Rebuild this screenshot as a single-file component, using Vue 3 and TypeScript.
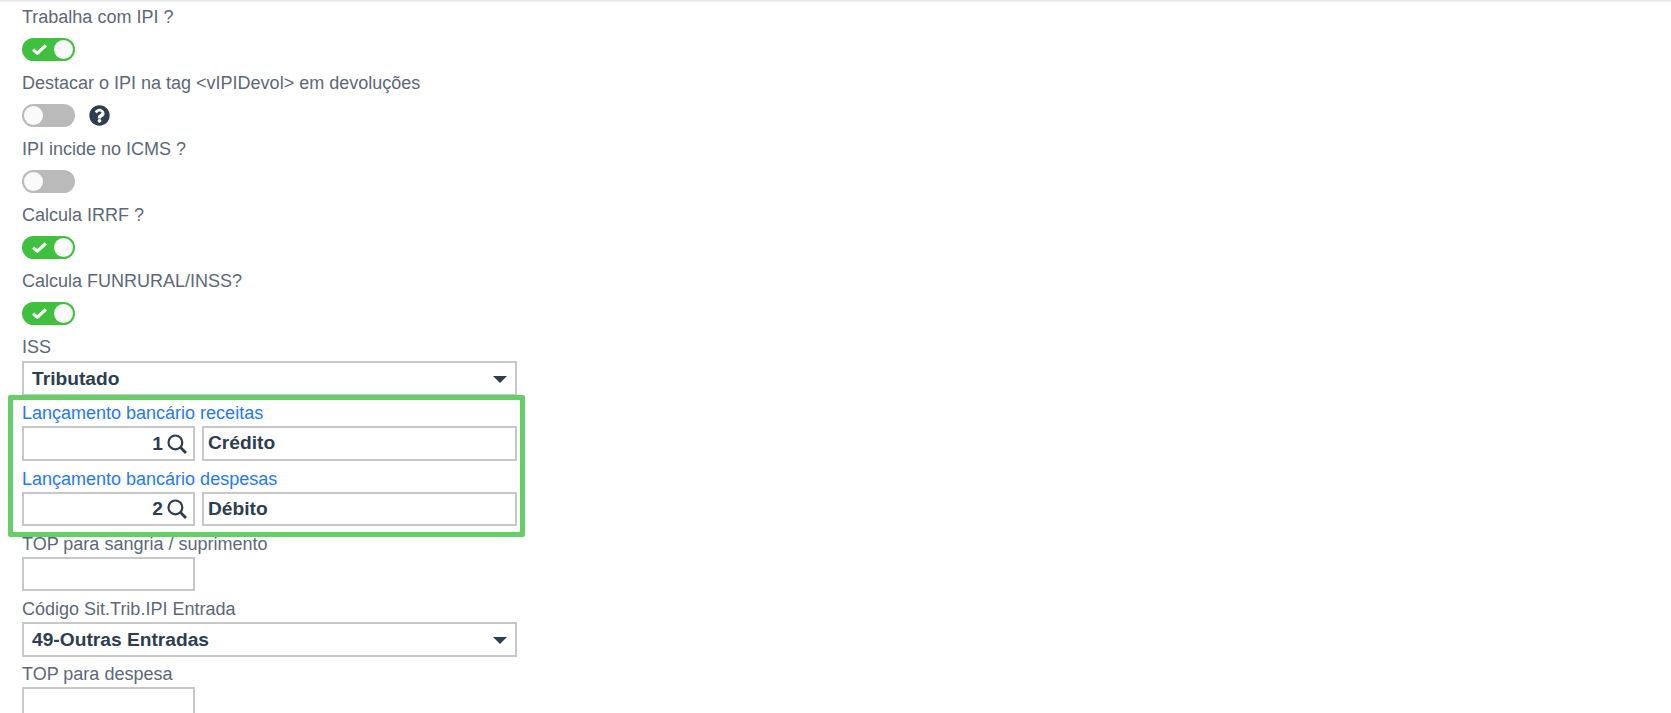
<template>
  <div class="page">
    <div class="top-shadow"></div>

    <div v-for="item in toggles" :key="item.label" class="field">
      <label class="toggle-label">{{ item.label }}</label>
      <div class="toggle-row">
        <span :class="['switch', { on: item.on }]">
          <svg v-if="item.on" class="check" viewBox="0 0 15 11">
            <path d="M1.200 5.600 5.400 9.200 13.800 1.400" fill="none" stroke="#fff" stroke-width="3.200" />
          </svg>
          <span class="knob"></span>
        </span>
        <svg v-if="item.help" class="help" viewBox="0 0 512 512">
          <path
            fill="#2c3e50"
            d="M504 256c0 137-111 248-248 248S8 393 8 256C8 119 119 8 256 8s248 111 248 248zM262.700 90c-54.500 0-89.300 23-116.600 63.800-3.500 5.300-2.400 12.400 2.700 16.300l34.700 26.300c5.200 3.900 12.600 3 16.700-2.100 17.900-22.700 30.100-35.800 57.300-35.800 20.400 0 45.700 13.100 45.700 33 0 15-12.400 22.700-32.600 34-23.600 13.200-54.800 29.700-54.800 70.900V320c0 6.600 5.400 12 12 12h56c6.600 0 12-5.400 12-12v-1.300c0-28.600 83.500-29.800 83.500-107.200C379.300 153.200 318.800 90 262.700 90zM256 339c-25.500 0-46.200 20.700-46.200 46.200 0 25.500 20.700 46.200 46.200 46.200s46.200-20.700 46.200-46.200c0-25.500-20.700-46.200-46.200-46.200z"
          />
        </svg>
      </div>
    </div>

    <div class="field">
      <label class="toggle-label">ISS</label>
      <div class="select">
        <span class="select-value">Tributado</span>
        <span class="caret"></span>
      </div>
    </div>

    <section class="highlighted">
      <div v-for="row in lancamentos" :key="row.label" class="field">
        <label class="field-label link">{{ row.label }}</label>
        <div class="lookup-row">
          <div class="box lookup">
            <span class="code">{{ row.code }}</span>
            <svg class="search" viewBox="0 0 20 20">
              <circle cx="8.400" cy="8.400" r="6.900" fill="none" stroke="#2c3e50" stroke-width="2.200" />
              <path d="M13.300 13.300 19 19" fill="none" stroke="#2c3e50" stroke-width="2.800" />
            </svg>
          </div>
          <div class="box desc">{{ row.desc }}</div>
        </div>
      </div>
      <div class="highlight-frame"></div>
    </section>

    <div class="field">
      <label class="field-label">TOP para sangria / suprimento</label>
      <div class="box lookup"></div>
    </div>

    <div class="field">
      <label class="field-label">Código Sit.Trib.IPI Entrada</label>
      <div class="select">
        <span class="select-value">49-Outras Entradas</span>
        <span class="caret"></span>
      </div>
    </div>

    <div class="field">
      <label class="field-label">TOP para despesa</label>
      <div class="box lookup"></div>
    </div>
  </div>
</template>

<script setup lang="ts">
interface ToggleItem {
  label: string;
  on: boolean;
  help?: boolean;
}

interface LancamentoRow {
  label: string;
  code: number;
  desc: string;
}

const toggles: ToggleItem[] = [
  { label: 'Trabalha com IPI ?', on: true },
  { label: 'Destacar o IPI na tag <vIPIDevol> em devoluções', on: false, help: true },
  { label: 'IPI incide no ICMS ?', on: false },
  { label: 'Calcula IRRF ?', on: true },
  { label: 'Calcula FUNRURAL/INSS?', on: true }
];

const lancamentos: LancamentoRow[] = [
  { label: 'Lançamento bancário receitas', code: 1, desc: 'Crédito' },
  { label: 'Lançamento bancário despesas', code: 2, desc: 'Débito' }
];
</script>

<style>
html,
body {
  margin: 0;
  background: #fff;
  overflow: hidden;
}
</style>

<style scoped>
.page {
  position: relative;
  height: 713px;
  overflow: hidden;
  padding: 3px 0 0 22px;
  box-sizing: border-box;
  font-family: "Liberation Sans", Arial, sans-serif;
  font-size: 18px;
  color: #5c6878;
}

.top-shadow {
  position: absolute;
  top: 0;
  left: 0;
  right: 0;
  height: 3px;
  background: linear-gradient(#e4e4e4, #fff);
}

.field {
  width: 495px;
}

.toggle-label {
  display: block;
  height: 28px;
  line-height: 28px;
  white-space: nowrap;
}

.field-label {
  display: block;
  height: 30.800px;
  padding-top: 4.800px;
  box-sizing: border-box;
  line-height: 26px;
  white-space: nowrap;
}

.toggle-row {
  display: flex;
  align-items: flex-start;
  gap: 14px;
  height: 38px;
  padding-top: 7px;
  box-sizing: border-box;
}

.switch {
  display: flex;
  align-items: center;
  justify-content: space-between;
  box-sizing: border-box;
  width: 53px;
  height: 23px;
  padding: 2px;
  border-radius: 12px;
  background: #bababa;
}

.switch.on {
  background: #3fc13f;
}

.knob {
  width: 19px;
  height: 19px;
  border-radius: 50%;
  background: #fafafa;
}

.switch:not(.on) .knob {
  margin-right: auto;
}

.check {
  width: 15px;
  height: 11px;
  margin-left: 8px;
}

.help {
  width: 21px;
  height: 21px;
  margin-top: 1px;
}

.select {
  display: flex;
  align-items: center;
  justify-content: space-between;
  box-sizing: border-box;
  height: 34.500px;
  padding: 2px 8px 0 8px;
  border: 2px solid #c8c8c8;
  background: #fff;
}

.select-value {
  font-size: 19.200px;
  font-weight: 700;
  color: #2c3e50;
}

.caret {
  width: 0;
  height: 0;
  margin-top: 1px;
  border-left: 7px solid transparent;
  border-right: 7px solid transparent;
  border-top: 7px solid #2c3e50;
}

.highlighted {
  position: relative;
  width: 495px;
}

.highlight-frame {
  position: absolute;
  top: -0.500px;
  left: -14px;
  right: -8px;
  bottom: -11px;
  border: 5px solid #66ce66;
  border-radius: 2px;
  pointer-events: none;
}

.lookup-row {
  display: flex;
  gap: 7px;
}

.box {
  box-sizing: border-box;
  height: 34.500px;
  border: 2px solid #c8c8c8;
  background: #fff;
}

.lookup {
  display: flex;
  align-items: center;
  justify-content: flex-end;
  gap: 4px;
  flex: none;
  width: 173px;
  padding-right: 6px;
}

.code,
.desc {
  font-size: 19.200px;
  font-weight: 700;
  color: #2c3e50;
}

.desc {
  flex: 1;
  line-height: 30.500px;
  padding-left: 4px;
}

.search {
  width: 20px;
  height: 20px;
}

.link {
  color: #1f78ff;
}
</style>
